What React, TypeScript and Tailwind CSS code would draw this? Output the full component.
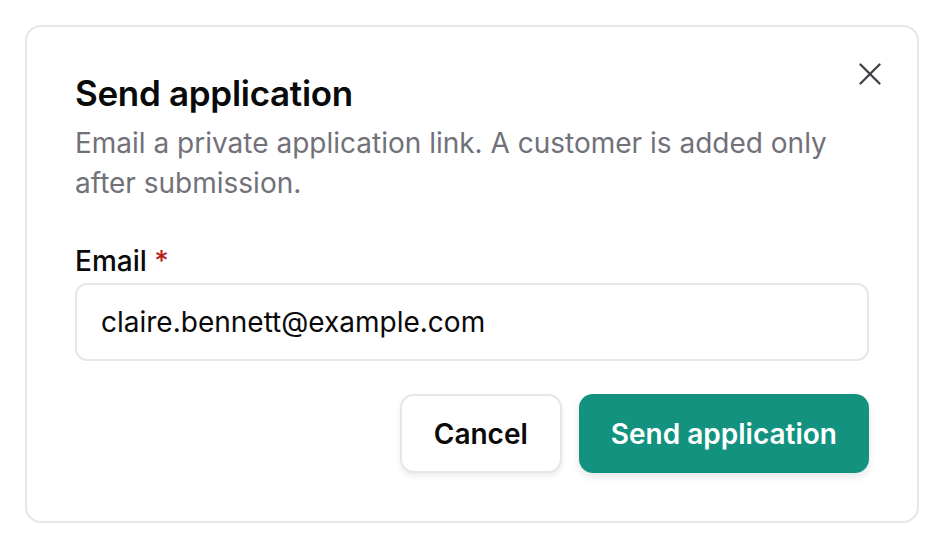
import { X } from 'lucide-react'

export default function App() {
  return (
    <div className="w-[944px] h-[548px] bg-white p-[25px] font-['Inter',sans-serif]">
      <div className="relative h-[498px] rounded-[16px] border-2 border-[#e6e6e6] bg-white px-[48px] pt-[48px] pb-[48px] flex flex-col">
        <button className="absolute right-[28px] top-[28px] text-[#3f3f46]">
          <X size={38} strokeWidth={1.5} />
        </button>

        <h2 className="text-[35px] leading-[36px] font-semibold text-[#0a0a0a] tracking-[-0.3px]">
          Send application
        </h2>
        <p className="mt-[12px] text-[28px] leading-[40px] text-[#71717a] pr-[30px]">
          Email a private application link. A customer is added only after submission.
        </p>

        <label className="mt-[40px] text-[28px] leading-[36px] font-medium text-[#0a0a0a]">
          Email <span className="text-[#b91c1c]">*</span>
        </label>
        <div className="mt-[4px] h-[78px] rounded-[12px] border-2 border-[#e6e6e6] flex items-center px-[24px] text-[28px] text-[#0a0a0a]">
          claire.bennett@example.com
        </div>

        <div className="mt-[33px] flex justify-end gap-[17px]">
          <button className="h-[79px] px-[32px] rounded-[14px] border-2 border-[#e6e6e6] bg-white text-[28px] font-semibold text-[#0a0a0a] shadow-[0_3px_6px_rgba(0,0,0,0.08)]">
            Cancel
          </button>
          <button className="h-[79px] px-[32px] rounded-[14px] bg-[#13937f] text-[28px] font-semibold text-white shadow-[0_4px_8px_rgba(0,0,0,0.1)]">
            Send application
          </button>
        </div>
      </div>
    </div>
  )
}
